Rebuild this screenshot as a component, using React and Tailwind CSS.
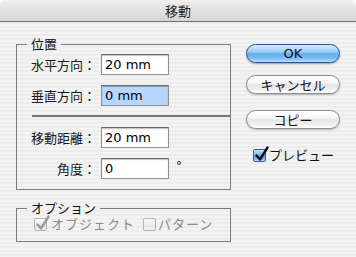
import React from "react";

const jp = { fontFamily: '"Noto Sans CJK JP", "Noto Sans", sans-serif' };
const lat = { fontFamily: '"DejaVu Sans", "Noto Sans CJK JP", sans-serif' };

function Field({ value, selected }) {
  return (
    <div
      className={
        "ml-[5px] w-[68px] h-[21px] border border-[#8e8e8e] border-t-[#6a6a6a] shadow-[inset_0_1px_1px_rgba(0,0,0,0.25)] flex items-center pl-[3px] text-[13px] text-black " +
        (selected ? "bg-[#b6d6fd]" : "bg-white")
      }
      style={lat}
    >
      {value}
    </div>
  );
}

function Row({ label, value, selected, unit }) {
  return (
    <div className="flex items-center h-[21px]">
      <div className="w-[79px] text-right text-[13px] leading-[14px] text-[#1a1a1a]" style={jp}>
        {label}
      </div>
      <Field value={value} selected={selected} />
      {unit && (
        <span className="ml-[7px] text-[12px] text-[#222] -mt-[6px]" style={lat}>
          {unit}
        </span>
      )}
    </div>
  );
}

function Check({ variant }) {
  const box =
    variant === "blue"
      ? "border-[#3f5f9c] bg-[linear-gradient(to_bottom,#c9e2fb_0%,#7fb6ee_45%,#4f97e3_55%,#7fc1f6_85%,#b7e0ff_100%)]"
      : "border-[#b3b3b3] bg-[linear-gradient(to_bottom,#fbfbfb_0%,#ececec_50%,#e2e2e2_55%,#f4f4f4_100%)]";
  return (
    <div className={"relative shrink-0 w-[13px] h-[13px] rounded-[2px] border " + box}>
      {variant !== "disabledEmpty" && (
        <svg
          className="absolute left-[1px] top-[-4px] overflow-visible"
          width="14"
          height="16"
          viewBox="0 0 14 16"
        >
          <path
            d="M1.5 9.5 L5 13.5 L12.5 1.5"
            fill="none"
            stroke={variant === "blue" ? "#111" : "#9a9a9a"}
            strokeWidth="2.4"
            strokeLinecap="round"
            strokeLinejoin="round"
          />
        </svg>
      )}
    </div>
  );
}

function Button({ children, primary, className = "" }) {
  const look = primary
    ? "border-[#33509a] bg-[linear-gradient(to_bottom,#d4ebfd_0%,#9ccdf6_40%,#64ace9_52%,#7fc0f4_80%,#b9e3ff_100%)] shadow-[0_1px_2px_rgba(0,0,0,0.35)]"
    : "border-[#8c8c8c] bg-[linear-gradient(to_bottom,#ffffff_0%,#f7f7f7_40%,#e4e4e4_52%,#f1f1f1_80%,#ffffff_100%)] shadow-[0_1px_2px_rgba(0,0,0,0.25)]";
  return (
    <div
      className={
        "w-[94px] h-[19px] rounded-full border flex items-center justify-center text-[13px] leading-[14px] text-[#111] " +
        look +
        " " +
        className
      }
      style={jp}
    >
      {children}
    </div>
  );
}

export default function App() {
  return (
    <div className="w-[356px] h-[257px] bg-white overflow-hidden" style={jp}>
      <div className="h-[22px] rounded-t-[6px] border-b border-[#707070] bg-[linear-gradient(to_bottom,#f0f0f0_0%,#e4e4e4_40%,#d6d6d6_100%)] flex items-center justify-center text-[13px] text-[#222]">
        移動
      </div>
      <div className="h-[235px] flex pl-[16px] pt-[15px] bg-[image:repeating-linear-gradient(to_bottom,#ededed_0px,#ededed_2px,#f3f3f3_2px,#f3f3f3_4px)]">
        <div className="flex flex-col w-[215px]">
          <fieldset className="border border-[#7c7c7c] pt-[3px] pb-[10px]">
            <legend className="ml-[10px] px-[4px] text-[13px] leading-[14px] text-[#111]">位置</legend>
            <Row label="水平方向：" value="20 mm" />
            <div className="h-[10px]" />
            <Row label="垂直方向：" value="0 mm" selected />
            <div className="ml-[15px] mt-[9px] h-[2px] bg-[#767676]" />
            <div className="h-[10px]" />
            <Row label="移動距離：" value="20 mm" />
            <div className="h-[10px]" />
            <Row label="角度：" value="0" unit="°" />
          </fieldset>
          <fieldset className="mt-[11px] border border-[#7c7c7c] pt-[1px] pb-[9px]">
            <legend className="ml-[10px] px-[4px] text-[13px] leading-[14px] text-[#111]">オプション</legend>
            <div className="flex items-center h-[16px] pl-[17px] text-[13px] leading-[14px] text-[#8a8a8a]">
              <Check variant="disabledChecked" />
              <span className="ml-[4px] tracking-[1px]">オブジェクト</span>
              <div className="ml-[8px]">
                <Check variant="disabledEmpty" />
              </div>
              <span className="ml-[2px] tracking-[1px]">パターン</span>
            </div>
          </fieldset>
        </div>
        <div className="flex flex-col ml-[15px] pt-[7px]">
          <Button primary>
            <span style={lat}>OK</span>
          </Button>
          <Button className="mt-[12px]">キャンセル</Button>
          <Button className="mt-[16px]">コピー</Button>
          <div className="mt-[18px] ml-[7px] flex items-center h-[16px] text-[13px] text-[#111]">
            <Check variant="blue" />
            <span className="ml-[3px]">プレビュー</span>
          </div>
        </div>
      </div>
    </div>
  );
}
